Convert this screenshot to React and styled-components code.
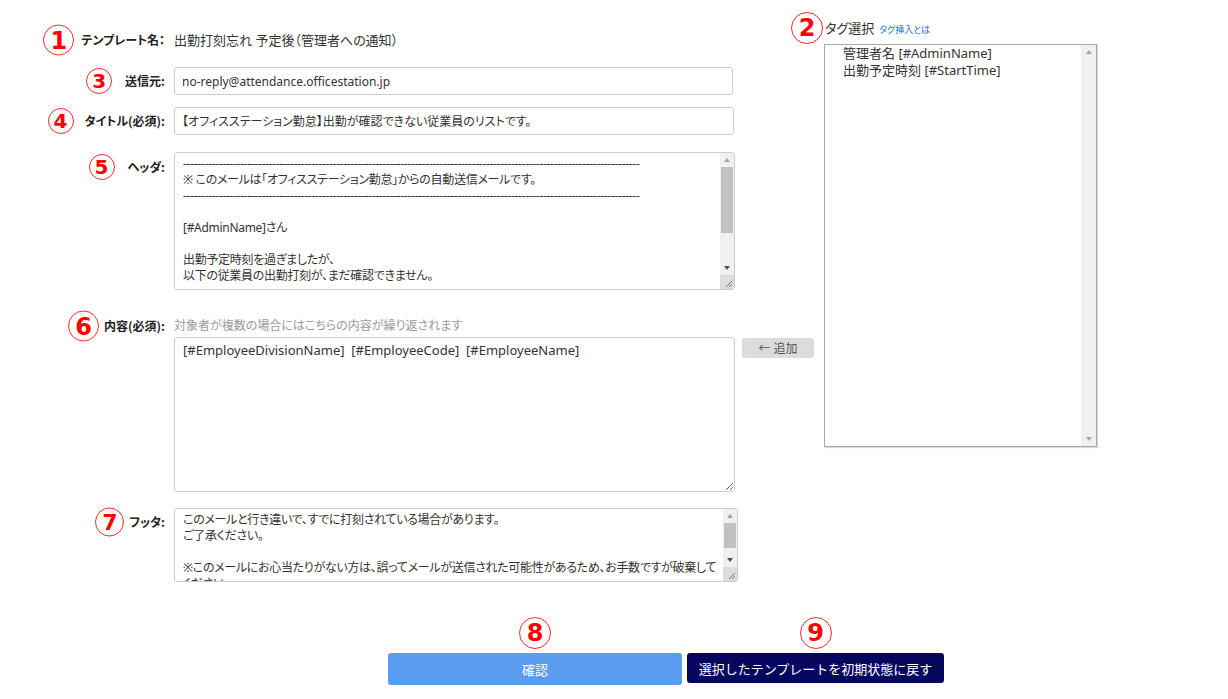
import React from "react";
import styled, { createGlobalStyle } from "styled-components";

const GlobalStyle = createGlobalStyle`
  html, body {
    margin: 0;
    padding: 0;
    background: #fff;
  }
  body {
    font-family: "Noto Sans", "Noto Sans CJK JP", sans-serif;
    font-feature-settings: "palt" 1;
    color: #333;
    font-size: 13px;
  }
`;

const Page = styled.div`
  width: 1228px;
  height: 699px;
  padding-top: 20px;
  box-sizing: border-box;
`;
const Top = styled.div`
  display: flex;
  align-items: flex-start;
`;
const FormColumn = styled.div`
  display: flex;
  flex-direction: column;
  width: 814px;
`;
const TagColumn = styled.div`
  display: flex;
  flex-direction: column;
  margin-left: 10px;
  width: 273px;
`;
const Row = styled.div`
  display: flex;
  align-items: ${({ $top }) => ($top ? "flex-start" : "center")};
  margin-top: ${({ $mt }) => $mt}px;
`;
const Label = styled.div`
  width: 165px;
  flex: none;
  display: flex;
  justify-content: flex-end;
  padding-top: ${({ $pt }) => $pt || 0}px;
  box-sizing: border-box;
`;
const LabelText = styled.span`
  position: relative;
  font-family: "Noto Sans CJK JP", sans-serif;
  font-size: 12px;
  font-weight: bold;
  line-height: 16px;
  color: #222;
  white-space: nowrap;
`;
const Mark = styled.span`
  position: absolute;
  top: 50%;
  right: calc(100% + ${({ $gap }) => $gap}px);
  transform: translateY(-50%);
  width: ${({ $size }) => $size}px;
  height: ${({ $size }) => $size}px;
  box-sizing: border-box;
  border: 1px solid #ff2a2a;
  border-radius: 50%;
  background: #fff;
  color: #ff0000;
  display: flex;
  align-items: center;
  justify-content: center;
  font-family: "DejaVu Sans", sans-serif;
  font-weight: bold;
  font-size: ${({ $size }) => Math.round($size * 0.76)}px;
  line-height: 1;
`;
const TopMark = styled(Mark)`
  top: auto;
  right: auto;
  left: 50%;
  bottom: calc(100% + 4px);
  transform: translateX(-50%);
`;
const Field = styled.div`
  display: flex;
  margin-left: 9px;
  flex: none;
`;
const ValueText = styled.span`
  font-size: 13px;
  line-height: 18px;
  color: #333;
`;
const Input = styled.input`
  display: block;
  width: ${({ $w }) => $w || 559}px;
  height: 28px;
  box-sizing: border-box;
  border: 1px solid #ccc;
  border-radius: 3px;
  padding: 0 7px;
  font-family: inherit;
  font-feature-settings: "palt" 1;
  font-size: 12px;
  color: #333;
  outline: none;
`;
const TextArea = styled.textarea`
  display: block;
  width: 561px;
  height: ${({ $h }) => $h}px;
  box-sizing: border-box;
  border: 1px solid #ccc;
  border-radius: 3px;
  padding: 4px 8px;
  font-family: inherit;
  font-feature-settings: "palt" 1;
  font-size: 13px;
  line-height: 16px;
  color: #333;
  resize: both;
  outline: none;
`;

/* textarea with a classic scrollbar column beside the text */
const ScrollBox = styled.div`
  display: flex;
  width: ${({ $w }) => $w}px;
  height: ${({ $h }) => $h}px;
  box-sizing: border-box;
  border: 1px solid #ccc;
  border-radius: 3px;
  overflow: hidden;
`;
const BoxText = styled.textarea`
  flex: 1;
  min-width: 0;
  border: none;
  resize: none;
  overflow: hidden;
  padding: 3px 4px 3px 8px;
  font-family: inherit;
  font-feature-settings: "palt" 1;
  font-size: 12px;
  letter-spacing: -0.3px;
  line-height: 16px;
  color: #333;
  outline: none;
`;
const ScrollBar = styled.div`
  width: ${({ $w }) => $w || 14}px;
  flex: none;
  display: flex;
  flex-direction: column;
  background: #f0f0f0;
`;
const ScrollArrow = styled.div`
  height: 14px;
  flex: none;
  display: flex;
  align-items: center;
  justify-content: center;
  &::before {
    content: "";
    width: 0;
    height: 0;
    border-left: 3.5px solid transparent;
    border-right: 3.5px solid transparent;
    ${({ $dir, $color }) =>
      $dir === "up"
        ? `border-bottom: 4px solid ${$color};`
        : `border-top: 4px solid ${$color};`}
  }
`;
const ScrollTrack = styled.div`
  flex: 1;
  padding: 0 1px;
`;
const Thumb = styled.div`
  margin-top: ${({ $top }) => $top}px;
  height: ${({ $h }) => $h}px;
  background: #c1c1c1;
`;
const Grip = styled.div`
  height: 14px;
  flex: none;
  background: #dcdcdc;
  display: flex;
  align-items: flex-end;
  justify-content: flex-end;
`;

const Hint = styled.span`
  font-size: 12px;
  line-height: 16px;
  color: #999;
`;
const AddButton = styled.button`
  margin-left: 7px;
  margin-top: 1px;
  width: 72px;
  height: 20px;
  border: none;
  border-radius: 3px;
  background: #dcdcdc;
  color: #555;
  font-family: inherit;
  font-size: 12px;
  padding: 0;
`;
const TagHeader = styled.div`
  display: flex;
  align-items: baseline;
  line-height: 16px;
`;
const TagTitle = styled.span`
  position: relative;
  font-size: 13px;
  color: #333;
  margin-left: 1px;
`;
const TagLink = styled.a`
  font-size: 9px;
  color: #1a73e8;
  margin-left: 5px;
  text-decoration: none;
`;
const ListBox = styled.div`
  display: flex;
  margin-top: 6px;
  height: 403px;
  box-sizing: border-box;
  border: 1px solid #a9a9a9;
  box-shadow: 1px 1px 1px rgba(0, 0, 0, 0.15);
`;
const OptionList = styled.div`
  flex: 1;
`;
const Option = styled.div`
  padding-left: 18px;
  font-size: 13px;
  line-height: 17px;
  color: #333;
`;
const ButtonRow = styled.div`
  display: flex;
  gap: 5px;
  margin-top: 71px;
  padding-left: 388px;
`;
const Button = styled.button`
  position: relative;
  flex: none;
  width: ${({ $w }) => $w}px;
  height: ${({ $h }) => $h}px;
  border: none;
  border-radius: 3px;
  background: ${({ $bg }) => $bg};
  color: #fff;
  font-family: inherit;
  font-size: 13px;
  padding: 0;
`;

const GripLines = () => (
  <svg width="14" height="14" viewBox="0 0 14 14">
    <path d="M12 6 L6 12 M12 9 L9 12" stroke="#777" strokeWidth="1" />
  </svg>
);

const ScrollField = ({ w, h, thumbTop, thumbH, value }) => (
  <ScrollBox $w={w} $h={h}>
    <BoxText defaultValue={value} />
    <ScrollBar>
      <ScrollArrow $dir="up" $color="#a3a3a3" />
      <ScrollTrack>
        <Thumb $top={thumbTop} $h={thumbH} />
      </ScrollTrack>
      <ScrollArrow $dir="down" $color="#505050" />
      <Grip>
        <GripLines />
      </Grip>
    </ScrollBar>
  </ScrollBox>
);

const dashes = "-".repeat(128);

const headerText = `${dashes}
※ このメールは「オフィスステーション勤怠」からの自動送信メールです。
${dashes}

[#AdminName]さん

出勤予定時刻を過ぎましたが、
以下の従業員の出勤打刻が、まだ確認できません。`;

const footerText = `このメールと行き違いで、すでに打刻されている場合があります。
ご了承ください。

※このメールにお心当たりがない方は、誤ってメールが送信された可能性があるため、お手数ですが破棄してください。`;

const App = () => {
  return (
    <>
      <GlobalStyle />
      <Page>
        <Top>
          <FormColumn>
            <Row $mt={11}>
              <Label>
                <LabelText>
                  <Mark $size={31} $gap={7}>1</Mark>
                  テンプレート名：
                </LabelText>
              </Label>
              <Field>
                <ValueText>出勤打刻忘れ 予定後（管理者への通知）</ValueText>
              </Field>
            </Row>
            <Row $mt={18}>
              <Label>
                <LabelText>
                  <Mark $size={26} $gap={13}>3</Mark>
                  送信元:
                </LabelText>
              </Label>
              <Field>
                <Input defaultValue="no-reply@attendance.officestation.jp" />
              </Field>
            </Row>
            <Row $mt={12}>
              <Label>
                <LabelText>
                  <Mark $size={26} $gap={11}>4</Mark>
                  タイトル(必須):
                </LabelText>
              </Label>
              <Field>
                <Input
                  $w={560}
                  defaultValue="【オフィスステーション勤怠】出勤が確認できない従業員のリストです。"
                />
              </Field>
            </Row>
            <Row $mt={17} $top>
              <Label $pt={7}>
                <LabelText>
                  <Mark $size={26} $gap={13}>5</Mark>
                  ヘッダ:
                </LabelText>
              </Label>
              <Field>
                <ScrollField
                  w={561}
                  h={138}
                  thumbTop={0}
                  thumbH={66}
                  value={headerText}
                />
              </Field>
            </Row>
            <Row $mt={28}>
              <Label>
                <LabelText>
                  <Mark $size={31} $gap={5}>6</Mark>
                  内容(必須):
                </LabelText>
              </Label>
              <Field>
                <Hint>対象者が複数の場合にはこちらの内容が繰り返されます</Hint>
              </Field>
            </Row>
            <Row $mt={3} $top>
              <Label />
              <Field>
                <TextArea
                  $h={155}
                  defaultValue="[#EmployeeDivisionName]  [#EmployeeCode]  [#EmployeeName]"
                />
              </Field>
              <AddButton>← 追加</AddButton>
            </Row>
            <Row $mt={16} $top>
              <Label $pt={6}>
                <LabelText>
                  <Mark $size={29} $gap={5}>7</Mark>
                  フッタ:
                </LabelText>
              </Label>
              <Field>
                <ScrollField
                  w={564}
                  h={74}
                  thumbTop={0}
                  thumbH={25}
                  value={footerText}
                />
              </Field>
            </Row>
          </FormColumn>
          <TagColumn>
            <TagHeader>
              <TagTitle>
                <Mark $size={32} $gap={2}>2</Mark>
                タグ選択
              </TagTitle>
              <TagLink href="#">タグ挿入とは</TagLink>
            </TagHeader>
            <ListBox>
              <OptionList>
                <Option>管理者名 [#AdminName]</Option>
                <Option>出勤予定時刻 [#StartTime]</Option>
              </OptionList>
              <ScrollBar $w={15}>
                <ScrollArrow $dir="up" $color="#a3a3a3" />
                <ScrollTrack />
                <ScrollArrow $dir="down" $color="#a3a3a3" />
              </ScrollBar>
            </ListBox>
          </TagColumn>
        </Top>
        <ButtonRow>
          <Button $w={294} $h={32} $bg="#5b9cf0">
            <TopMark $size={32} $gap={0}>8</TopMark>
            確認
          </Button>
          <Button $w={257} $h={30} $bg="#06065f">
            <TopMark $size={32} $gap={0}>9</TopMark>
            選択したテンプレートを初期状態に戻す
          </Button>
        </ButtonRow>
      </Page>
    </>
  );
};

export default App;
